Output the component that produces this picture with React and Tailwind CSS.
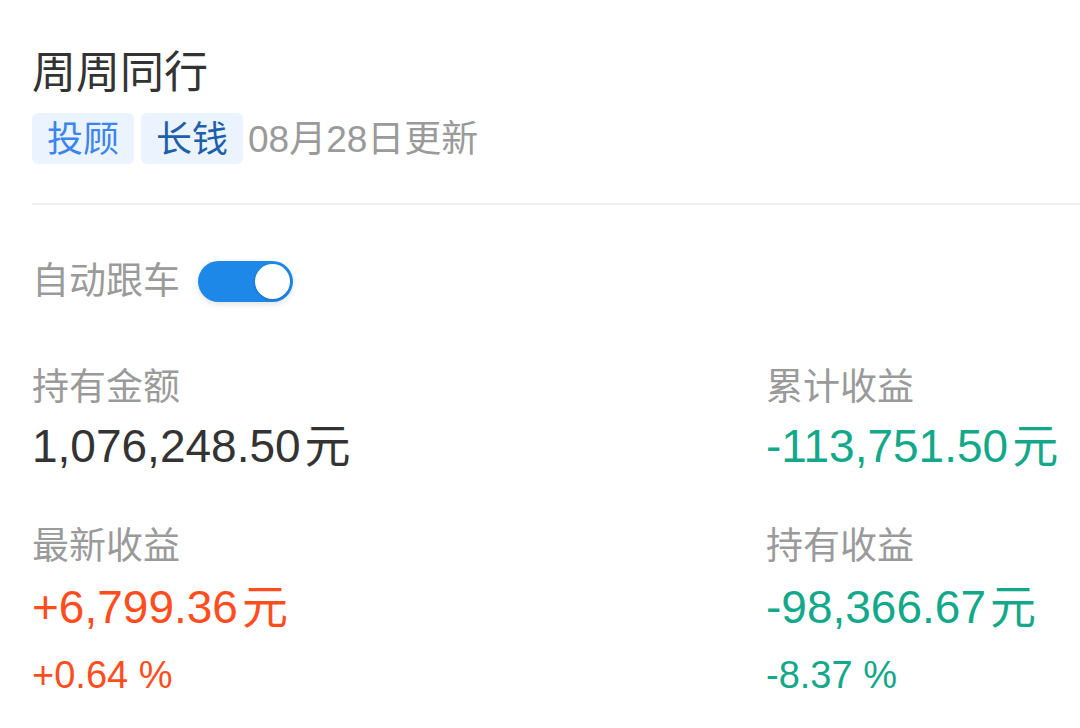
export default function App() {
  const font = { fontFamily: '"Liberation Sans", "Noto Sans CJK SC", sans-serif' };
  return (
    <div className="w-[1080px] h-[728px] bg-white overflow-hidden pl-[32px] pt-[43px]" style={font}>
      <div className="text-[44px] leading-[60px] text-[#333333]">周周同行</div>
      <div className="mt-[10px] h-[51px] flex items-center">
        <span className="h-[51px] px-[15px] pt-[3px] flex items-center rounded-[6px] bg-[#ebf4fe] text-[36px] leading-[48px] text-[#3c84ee]">投顾</span>
        <span className="ml-[7px] h-[51px] px-[15px] pt-[3px] flex items-center rounded-[6px] bg-[#ebf4fe] text-[36px] leading-[48px] text-[#1d5fa9]">长钱</span>
        <span className="ml-[5px] pt-[3px] text-[37px] leading-[48px] text-[#9a9a9a]">08月28日更新</span>
      </div>
      <div className="mt-[39px] h-[2px] bg-[#f0f0f0]" />
      <div className="mt-[56px] h-[41px] flex items-center">
        <span className="text-[37px] leading-[41px] text-[#9a9a9a]">自动跟车</span>
        <div className="ml-[18px] w-[95px] h-[41px] rounded-full bg-[#1e88e8] flex items-center justify-end pr-[3px] shadow-[0_2px_6px_rgba(0,0,0,0.12)]">
          <div className="w-[35px] h-[35px] rounded-full bg-white shadow-[0_1px_3px_rgba(0,0,0,0.2)]" />
        </div>
      </div>
      <div className="mt-[61px] grid grid-cols-[734px_1fr]">
        <div>
          <div className="text-[37px] leading-[50px] text-[#9a9a9a]">持有金额</div>
          <div className="mt-[5px] text-[46px] leading-[56px] text-[#333333]">1,076,248.50<span className="ml-[4px]">元</span></div>
          <div className="mt-[48px] text-[37px] leading-[50px] text-[#9a9a9a]">最新收益</div>
          <div className="mt-[7px] text-[46px] leading-[56px] text-[#ff4d1d]">+6,799.36<span className="ml-[4px]">元</span></div>
          <div className="mt-[15px] text-[38px] leading-[50px] text-[#ff4d1d]">+0.64 %</div>
        </div>
        <div>
          <div className="text-[37px] leading-[50px] text-[#9a9a9a]">累计收益</div>
          <div className="mt-[5px] text-[46px] leading-[56px] text-[#13a88a]">-113,751.50<span className="ml-[4px]">元</span></div>
          <div className="mt-[48px] text-[37px] leading-[50px] text-[#9a9a9a]">持有收益</div>
          <div className="mt-[7px] text-[46px] leading-[56px] text-[#13a88a]">-98,366.67<span className="ml-[4px]">元</span></div>
          <div className="mt-[15px] text-[38px] leading-[50px] text-[#13a88a]">-8.37 %</div>
        </div>
      </div>
    </div>
  );
}
